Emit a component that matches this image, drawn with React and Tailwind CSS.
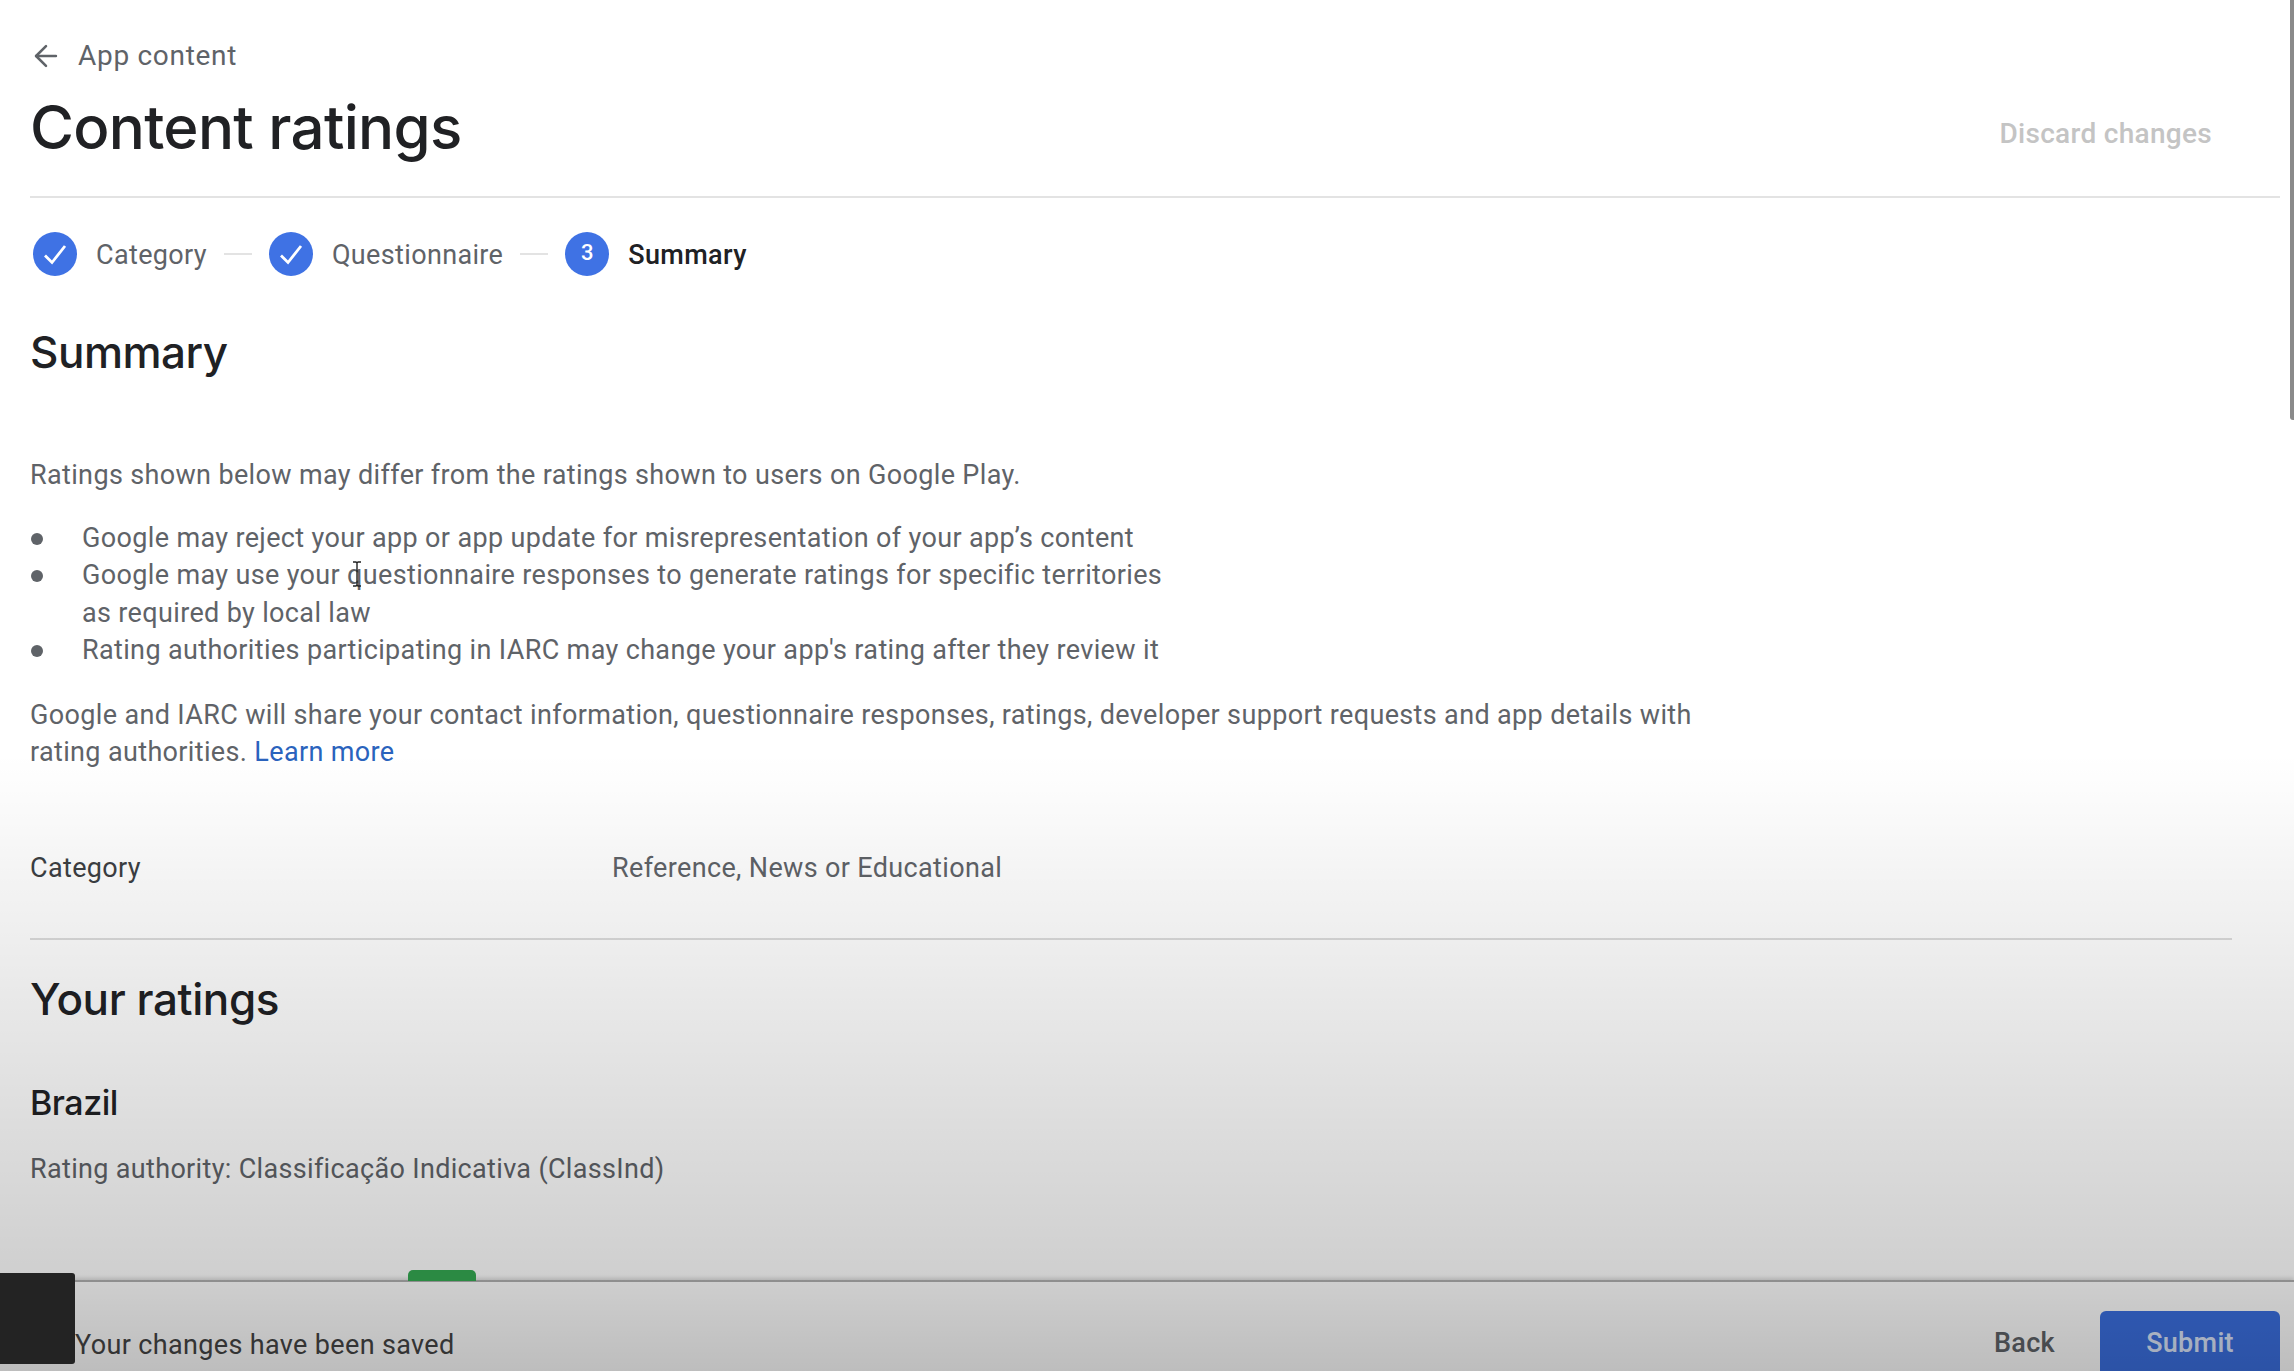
import { ArrowLeft } from 'lucide-react';

const Check = () => (
  <svg viewBox="0 0 44 44" className="w-[44px] h-[44px]">
    <circle cx="22" cy="22" r="22" fill="#3f72e4" />
    <path d="M12 23.5l7 7L32 14" fill="none" stroke="#ffffff" strokeWidth="2.8" />
  </svg>
);

const Step = ({ icon, label, active }) => (
  <div className="flex items-center">
    {icon}
    <span className={`ml-[19px] mt-[2px] text-[27px] leading-[32px] tracking-[0.35px] ${active ? 'text-[#202124] font-medium' : 'text-[#5f6368]'}`}>{label}</span>
  </div>
);

const Connector = () => <div className="w-[28px] h-[2px] bg-[#e3e3e3] mx-[17px]" />;

const bullets = [
  <>Google may reject your app or app update for misrepresentation of your app’s content</>,
  <>Google may use your questionnaire responses to generate ratings for specific territories<br />as required by local law</>,
  <>Rating authorities participating in IARC may change your app's rating after they review it</>,
];

export default function App() {
  return (
    <div className="relative h-screen w-full overflow-hidden bg-white flex flex-col font-['Roboto',sans-serif] text-[#5f6368]">
      <main className="flex-1 min-h-0 pl-[30px] pr-[14px]">
        <div className="flex items-center h-[32px] mt-[40px] text-[28px]">
          <ArrowLeft className="w-[34px] h-[34px] -ml-[1px] text-[#5f6368]" strokeWidth={1.8} />
          <span className="ml-[15px] tracking-[0.7px]">App content</span>
        </div>

        <div className="flex items-center justify-between h-[68px] mt-[21px] pr-[68px]">
          <h1 className="font-['Inter',sans-serif] font-medium text-[60px] leading-[68px] tracking-[-0.7px] text-[#202124]">Content ratings</h1>
          <button className="text-[28px] tracking-[0.3px] font-medium text-[#c4c4c4] mt-[14px]">Discard changes</button>
        </div>

        <div className="h-[2px] bg-[#e3e3e3] mt-[35px]" />

        <div className="flex items-center mt-[34px] ml-[3px]">
          <Step icon={<Check />} label="Category" />
          <Connector />
          <Step icon={<Check />} label="Questionnaire" />
          <Connector />
          <Step
            active
            label="Summary"
            icon={
              <div className="w-[44px] h-[44px] rounded-full bg-[#3f72e4] flex items-center justify-center pb-[4px] text-white text-[22px] font-medium">3</div>
            }
          />
        </div>

        <h2 className="mt-[48px] font-['Inter',sans-serif] font-medium text-[44px] leading-[56px] tracking-[-0.5px] text-[#202124]">Summary</h2>

        <p className="mt-[77px] text-[27px] leading-[37.5px] tracking-[0.35px]">Ratings shown below may differ from the ratings shown to users on Google Play.</p>

        <ul className="mt-[25px] text-[27px] leading-[37.5px] tracking-[0.35px]">
          {bullets.map((b, i) => (
            <li key={i} className="flex">
              <span className="w-[52px] shrink-0 flex pt-[13px] pl-[1px]">
                <span className="w-[12px] h-[12px] rounded-full bg-[#5f6368]" />
              </span>
              <span>{b}</span>
            </li>
          ))}
        </ul>

        <p className="mt-[27px] text-[27px] leading-[37.5px] tracking-[0.35px] w-[1720px]">
          Google and IARC will share your contact information, questionnaire responses, ratings, developer support requests and app details with<br />rating authorities. <span className="text-[#2a63bd]">Learn more</span>
        </p>

        <div className="flex mt-[78px] text-[27px] leading-[37.5px] tracking-[0.35px]">
          <span className="w-[582px] text-[#3c4043]">Category</span>
          <span>Reference, News or Educational</span>
        </div>

        <div className="h-[2px] bg-[#dcdcdc] mt-[51px] mr-[48px]" />

        <h2 className="mt-[31px] font-['Inter',sans-serif] font-medium text-[44px] leading-[56px] tracking-[-0.4px] text-[#202124]">Your ratings</h2>

        <h3 className="mt-[54px] font-['Inter',sans-serif] font-medium text-[34px] leading-[44px] tracking-[-0.5px] text-[#202124]">Brazil</h3>

        <p className="mt-[26px] text-[27px] leading-[37.5px] tracking-[0.33px]">Rating authority: Classificação Indicativa (ClassInd)</p>
      </main>

      <footer className="relative h-[91px] shrink-0 border-t-2 border-[#b0b0b0] shadow-[0_-2px_4px_rgba(0,0,0,0.14)] bg-white flex items-start pl-[75px] pr-[14px]">
        <span className="mt-[47px] text-[27px] leading-[32px] tracking-[0.35px] text-[#444444]">Your changes have been saved</span>
        <div className="ml-auto flex items-start">
          <button className="mt-[45px] text-[27px] leading-[32px] tracking-[0.3px] font-medium">Back</button>
          <button className="ml-[45px] mt-[29px] w-[180px] h-[70px] rounded-t-[6px] bg-[#3b6fe0] text-[#dbe6fb] text-[27px] font-medium tracking-[0.3px] pb-[6px]">Submit</button>
        </div>
      </footer>

      {/* video fade over the lower part of the page */}
      <div className="absolute inset-0 pointer-events-none bg-[linear-gradient(to_bottom,rgba(0,0,0,0)_0%,rgba(0,0,0,0)_55%,rgba(0,0,0,0.19)_93%,rgba(0,0,0,0.26)_100%)]" />

      <div className="absolute left-[408px] top-[1270px] w-[68px] h-[11px] rounded-t-[5px] bg-[#2b8a43]" />
      <div className="absolute left-0 top-[1273px] w-[75px] h-[91px] rounded-r-[3px] bg-[#232323]" />
      <div className="absolute right-0 top-0 w-[4px] h-[420px] rounded-bl-[3px] bg-[#8a8a8a]" />

      <svg viewBox="0 0 12 26" className="absolute left-[351px] top-[561px] w-[12px] h-[26px]">
        <path d="M2 1h3l1 1 1-1h3M6 2v22M2 25h3l1-1 1 1h3" fill="none" stroke="#222222" strokeWidth="1.4" />
      </svg>
    </div>
  );
}
